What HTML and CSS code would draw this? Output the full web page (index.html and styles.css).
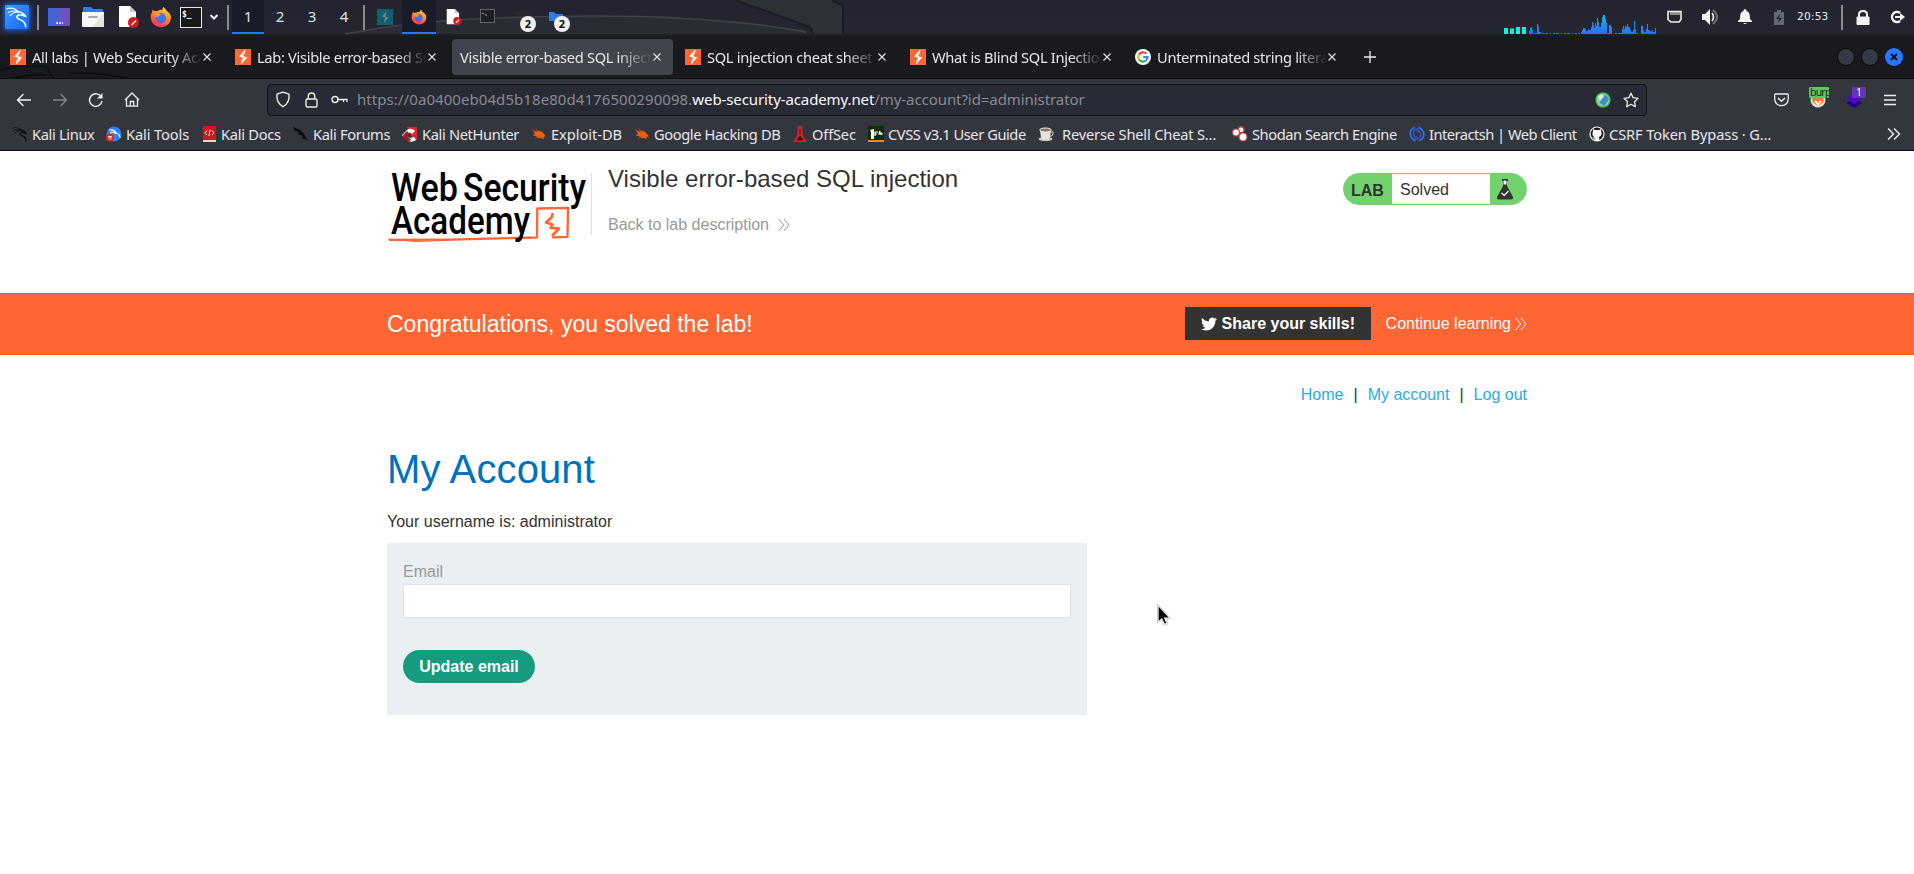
FILE: index.html
```html
<!DOCTYPE html>
<html lang="en">
<head>
<meta charset="utf-8">
<title>Visible error-based SQL injection</title>
<link rel="stylesheet" href="styles.css">
</head>
<body>
<svg class="defs" width="0" height="0" aria-hidden="true">
  <defs>
    <linearGradient id="gdesk" x1="0" x2="1"><stop offset="0" stop-color="#3568e0"/><stop offset="1" stop-color="#7a4cb0"/></linearGradient>
    <linearGradient id="gfox" x1="0.8" y1="0" x2="0.3" y2="1"><stop offset="0" stop-color="#ffdf45"/><stop offset="0.45" stop-color="#ff8a22"/><stop offset="1" stop-color="#f5305c"/></linearGradient>
    <linearGradient id="gcpu" x1="0" y1="0" x2="0" y2="1"><stop offset="0" stop-color="#12b5f5"/><stop offset="1" stop-color="#2470ff"/></linearGradient>
    <symbol id="dragon" viewBox="0 0 24 24"><g fill="none" stroke="currentColor" stroke-linecap="round" stroke-linejoin="round"><path d="M1 3C6 1.500 10 2.500 13.500 6.500M2.500 7C7 4.500 10 5 13.500 6.500M4.500 10.500C7 7.500 10 6.500 13 6.500" stroke-width="1.200"/><path d="M12 6C15 6.500 17.500 6.500 19.500 9L21.500 11.500 18 10C12.500 8.500 10 12 13.500 14 18 16 21 17 21.500 22.500" stroke-width="1.700"/></g></symbol>
    <symbol id="bolt" viewBox="0 0 16 16"><rect width="16" height="16" fill="#ff6633"/><path d="M9.500 1.500 4 7.500 8 8.700 6.800 14.500 12.200 8.400 8.300 7.200Z" fill="#fff"/><path d="M10 1 8.800 5.200M7.500 10.500 6.500 15" stroke="#fff" stroke-width="1.200"/></symbol>
    <symbol id="fox" viewBox="0 0 22 22"><path d="M13 1C15 1.500 15.500 4 18 6 21 8 22 12 20 16 17 21.500 9 23 4 18.500 .500 15.500-.300 10 2.200 6L2.500 3.500 4.200 5 7.500 5C9 3.500 11.500 4 12.500 3.700Z" fill="url(#gfox)"/><circle cx="10.800" cy="12.200" r="5" fill="#7a3fe0"/><circle cx="10.800" cy="11.800" r="4.400" fill="#337af5"/><path d="M4 6C7 7 8 6.500 11 8.500 10 10 8 9.500 8 11.500 6 11.500 5 9 4 6Z" fill="#ff9a28"/></symbol>
    <symbol id="doc" viewBox="0 0 22 22"><path d="M1 0H12L18 6V21H1Z" fill="#fff"/><path d="M12 0V6H18Z" fill="#c9c9c9"/><circle cx="15.500" cy="16.500" r="5.500" fill="#d3181e"/><path d="M13 18.500 17.500 14 18.500 15 14 19.500Z" fill="#fff"/></symbol>
    <symbol id="bug" viewBox="0 0 16 16"><path d="M2 4.500 5 5.500C8 3.500 11.500 5.500 13 8L14.500 10 12.500 11 13 13 10 12 7 12 5 10 1.500 9.500 4 8Z" fill="#e8600f"/><path d="M1 3.500 5 6M5 2.500 7 6M4 12.500 7 10M13 10 15 12" stroke="#b5521a" stroke-width=".8"/></symbol>
    <symbol id="close" viewBox="0 0 10 10"><path d="M1.500 1.500 8.500 8.500M8.500 1.500 1.500 8.500" stroke="#e6e6ea" stroke-width="1.100"/></symbol>
    <symbol id="dbl" viewBox="0 0 12 14"><path d="M.700 1 5.700 7 .700 13M6 1 11 7 6 13" fill="none" stroke="currentColor"/></symbol>
  </defs>
</svg>

<header class="panel">
  <svg class="wall" width="1914" height="36" viewBox="0 0 1914 36"><path d="M737 0 812 27 814 34H842V6L834 0Z" fill="#2e3038"/><path d="M735 0 810 27 813 34M832 0 843 6V34" fill="none" stroke="#1b1c27" stroke-width="2"/><path d="M345 34C470 14 690 8 806 32L806 34H345Z" fill="#292b35"/><path d="M345 34C400 24 440 20 500 18 640 12 740 20 806 32" fill="none" stroke="#40434a" stroke-width="1.500"/></svg>
  <div class="launch">
    <span class="kali"><svg width="22" height="22"><use href="#dragon"/></svg></span>
    <i class="sep s1"></i>
    <svg class="g9" width="22" height="18"><rect width="22" height="18" fill="url(#gdesk)"/><path d="M8 15H10M11 15H13M14 15H15" stroke="#fff" stroke-width="1.500"/></svg>
    <svg class="g12" width="22" height="20"><path d="M1 8V1Q1 0 2 0H9L11 2H20Q21 2 21 3V8Z" fill="#2f7bf2"/><path d="M0 5H22V19Q22 20 21 20H1Q0 20 0 19Z" fill="#f6f6f6"/><path d="M22 6V20H10Z" fill="#e3e3e3"/><path d="M7 10H15" stroke="#aaa" stroke-width="2" stroke-linecap="round"/></svg>
    <svg class="g14" width="22" height="22"><use href="#doc"/></svg>
    <svg class="g11" width="22" height="22"><use href="#fox"/></svg>
    <span class="term">$_</span>
    <svg class="g7" width="10" height="8"><path d="M1.500 2 5 5.500 8.500 2" fill="none" stroke="#eee" stroke-width="2"/></svg>
    <i class="sep s2"></i>
  </div>
  <div class="spaces"><b class="on">1</b><b>2</b><b>3</b><b>4</b></div>
  <i class="sep s3"></i>
  <div class="tasks">
    <span><svg width="16" height="16" viewBox="0 0 16 16"><rect width="16" height="16" fill="#125f70"/><path d="M9.500 2 5 7.500 8 8.500 7 14 11.500 8.500 8.500 7.500Z" fill="#73868c"/></svg></span>
    <span class="on"><svg width="16" height="16"><use href="#fox"/></svg></span>
    <span><svg width="16" height="16"><use href="#doc"/></svg></span>
    <span><svg width="16" height="14"><rect x=".5" y=".5" width="14" height="13" fill="#1d1e24" stroke="#63656d"/><path d="M2 4 4 5M5 6H7" stroke="#aaa"/></svg></span>
    <span><svg width="16" height="14"><path d="M0 2H16V6H0Z" fill="#292a31"/></svg><em>2</em></span>
    <span><svg width="16" height="14"><path d="M1 3H6L8 5H15V12H1Z" fill="#2f7bf2"/></svg><em>2</em></span>
  </div>
  <div class="status">
    <svg class="graph" width="152" height="20" viewBox="0 0 152 20"><path d="M0 14H4V20H0ZM6 14.500H10V20H6ZM12 13H16V20H12ZM18 13H22V20H18Z" fill="#08f5dc"/><path d="M25 20V17H26V14H27V13H28V16H29V19H33V10H34V12H35V18H37V20ZM77 20V18H78V16H79V14H81V15H82V17H84V15H85V16H87V13H88V8H89V11H90V14H91V9H92V12H93V4H94V8H95V13H97V9H98V3H99V1H101V5H102V9H103V19H105V11H107V13H108V20ZM117 20V19H118V15H119V12H120V15H121V12H122V13H123V10H124V13H126V16H127V18H129V16H130V7H131V15H132V19H134V20ZM137 20V12H139V16H140V18H142V15H143V10H144V16H146V17H147V18H148V16H149V18H151V14H152V20Z" fill="url(#gcpu)"/><path d="M38 19.500H76M111 19.500H117" stroke="#2676f2" stroke-dasharray="2 1 3 2 1 2"/></svg>
    <svg class="net" width="16" height="14"><path d="M1 1.500H14V9.500L12 12H4L1 9.500Z" fill="none" stroke="#eee" stroke-width="1.600"/><path d="M4 2V5M6 2V5M8 2V5M10 2V5M12 2V5" stroke="#eee"/></svg>
    <svg class="vol" width="18" height="16"><path d="M0 5H3L8 0V16L3 11H0Z" fill="#f3f3f3"/><path d="M10 4Q13 8 10 12" fill="none" stroke="#f3f3f3" stroke-width="1.700"/><path d="M11 1Q19 8 11 15" fill="none" stroke="#6d6e77" stroke-width="2"/></svg>
    <svg class="bell" width="14" height="16"><path d="M7 0Q8.500 0 8.500 2C12 3 12 7 12 10L14 12V13H0V12L2 10C2 7 2 3 5.500 2Q5.500 0 7 0ZM5 14H9Q7 16 5 14Z" fill="#f3f3f3"/></svg>
    <svg class="bat" width="10" height="15"><path d="M0 2H3V0H7V2H10V15H0Z" fill="#656772"/><path d="M6 4 2 9H5L4 13 8 8H5Z" fill="#20212c"/></svg>
    <time>20:53</time>
    <i class="sep s4"></i>
    <svg class="lock" width="14" height="15"><path d="M3 7V4.500Q3 1 7 1T11 4.500V7" fill="none" stroke="#f3f3f3" stroke-width="2"/><rect x=".5" y="6.500" width="13" height="8.500" rx="1" fill="#f3f3f3"/></svg>
    <svg class="out" width="15" height="14"><path d="M10 3A5 5 0 1 0 10 11" fill="none" stroke="#f3f3f3" stroke-width="2.400"/><path d="M5 6H10V3L15 7 10 11V8H5Z" fill="#f3f3f3"/></svg>
  </div>
</header>

<nav class="tabs">
  <svg class="wall" width="1914" height="42" viewBox="0 0 1914 42"><path d="M0 34Q22 28 47 31L54 43M10 43Q30 38 45 39M70 37Q100 36 130 43" fill="none" stroke="#0e0f12" stroke-width="2"/></svg>
  <div class="tab"><svg width="16" height="16"><use href="#bolt"/></svg><span>All labs | Web Security Academy</span><svg class="x" width="10" height="10"><use href="#close"/></svg></div>
  <div class="tab"><svg width="16" height="16"><use href="#bolt"/></svg><span>Lab: Visible error-based SQL injection</span><svg class="x" width="10" height="10"><use href="#close"/></svg></div>
  <div class="tab active"><span>Visible error-based SQL injection</span><svg class="x" width="10" height="10"><use href="#close"/></svg></div>
  <div class="tab"><svg width="16" height="16"><use href="#bolt"/></svg><span>SQL injection cheat sheet | Web</span><svg class="x" width="10" height="10"><use href="#close"/></svg></div>
  <div class="tab"><svg width="16" height="16"><use href="#bolt"/></svg><span>What is Blind SQL Injection? Tutorial</span><svg class="x" width="10" height="10"><use href="#close"/></svg></div>
  <div class="tab"><svg width="16" height="16" viewBox="0 0 16 16"><circle cx="8" cy="8" r="8" fill="#fff"/><g fill="none" stroke-width="2.200"><path d="M4 5.500A4.700 4.700 0 0 1 11.300 4.600" stroke="#ea4335"/><path d="M4 5.500A4.700 4.700 0 0 0 4 10.500" stroke="#fbbc05"/><path d="M4 10.500A4.700 4.700 0 0 0 11 11.500" stroke="#34a853"/><path d="M11 11.500Q12.700 10 12.600 8H8.200" stroke="#4285f4"/></g></svg><span>Unterminated string literal started</span><svg class="x" width="10" height="10"><use href="#close"/></svg></div>
  <svg class="plus" width="12" height="12"><path d="M6 0V12M0 6H12" stroke="#eee" stroke-width="1.300"/></svg>
  <div class="win"><i></i><i></i><i class="shut"><svg width="8" height="8"><path d="M1 1 7 7M7 1 1 7" stroke="#10131c" stroke-width="2"/></svg></i></div>
</nav>

<div class="toolbar">
  <svg class="back" width="16" height="14"><path d="M15 7H2M7.500 1 1.500 7 7.500 13" fill="none" stroke="#f2f2f4" stroke-width="1.300"/></svg>
  <svg class="fwd" width="16" height="14"><path d="M1 7H14M8.500 1 14.500 7 8.500 13" fill="none" stroke="#85868b" stroke-width="1.300"/></svg>
  <svg class="rel" width="16" height="16"><path d="M13.500 5.500A6.300 6.300 0 1 0 14 9" fill="none" stroke="#f2f2f4" stroke-width="1.400"/><path d="M14.500 1V6.500H9Z" fill="#f2f2f4"/></svg>
  <svg class="home" width="16" height="16"><path d="M1 8 8 1 15 8M2.500 7V14.200H13.500V7M6.300 14V9.500H9.700V14" fill="none" stroke="#f2f2f4" stroke-width="1.300" stroke-linejoin="round"/></svg>
  <div class="url">
    <svg class="shield" width="16" height="17"><path d="M8 1.200 14 3.200Q15 12 8 15.700 1 12 2 3.200Z" fill="none" stroke="#eee" stroke-width="1.400" stroke-linejoin="round"/></svg>
    <svg class="padl" width="13" height="16"><rect x="1" y="7" width="11" height="8" rx="1.500" fill="none" stroke="#eee" stroke-width="1.400"/><path d="M3.300 7V4Q3.300 1 6.500 1T9.700 4V7" fill="none" stroke="#eee" stroke-width="1.400"/></svg>
    <svg class="key" width="17" height="9"><circle cx="4" cy="4.500" r="3" fill="none" stroke="#eee" stroke-width="1.400"/><path d="M7 4.500H16V7M12.500 4.500V7" fill="none" stroke="#eee" stroke-width="1.300"/></svg>
    <span class="addr"><u>https://0a0400eb04d5b18e80d4176500290098.</u><b>web-security-academy.net</b>/my-account?id=administrator</span>
    <svg class="globe" width="16" height="16"><circle cx="8" cy="8" r="7.700" fill="#4cb44e"/><circle cx="8" cy="8" r="6.200" fill="#8fdca0"/><path d="M7 4 11 3 14 7 11 12 9 14 6 12 4 10 7 8Z" fill="#3f8fd0"/><path d="M3 4 7 2 9 5 5 8Z" fill="#d8f5c8"/></svg>
    <svg class="star" width="16" height="16"><path d="M8 1.200 10.100 5.600 15 6.300 11.500 9.700 12.300 14.700 8 12.300 3.700 14.700 4.500 9.700 1 6.300 5.900 5.600Z" fill="none" stroke="#eee" stroke-width="1.300" stroke-linejoin="round"/></svg>
  </div>
  <svg class="pocket" width="15" height="14"><path d="M1.500 1H13.500Q14.300 1 14.300 2V5.500Q14 12.500 7.500 12.700 1 12.500 .700 5.500V2Q.700 1 1.500 1Z" fill="none" stroke="#eee" stroke-width="1.300"/><path d="M4 5 7.500 8.300 11 5" fill="none" stroke="#eee" stroke-width="1.500"/></svg>
  <span class="ext e1"><svg width="16" height="16"><circle cx="8" cy="8" r="7.500" fill="#ece0d2"/><path d="M2 3 6 5H10L14 3 13.500 10 8 14 2.500 10Z" fill="#ec7e28"/><path d="M4 9H7L8 12 9 9H12L8 14Z" fill="#fff"/></svg><em>burp</em></span>
  <span class="ext e2"><svg width="16" height="16"><path d="M0 11 8 6 16 11 8 16Z" fill="#23008a"/><path d="M0 6 8 1 16 6 8 12Z" fill="#5009bd"/></svg><em>1</em></span>
  <svg class="menu" width="12" height="12"><path d="M0 1.500H12M0 6H12M0 10.500H12" stroke="#eee" stroke-width="1.300"/></svg>
</div>

<div class="marks">
  <a><svg class="dk" width="16" height="16"><use href="#dragon"/></svg><span>Kali Linux</span></a>
  <a><svg width="16" height="16" viewBox="0 0 16 16"><circle cx="8" cy="8" r="7.500" fill="#2d7df6"/><path d="M3 4Q9 3 10 7 14 8 14 12M4 7Q8 5 10 8" fill="none" stroke="#fff" stroke-width="1.200"/><circle cx="4" cy="11.500" r="4" fill="#dd2828"/><path d="M2 10.500H6M3.200 10V13.500M5 10V13.500" stroke="#fff" stroke-width=".8"/></svg><span>Kali Tools</span></a>
  <a><svg class="book" width="13" height="16"><rect width="13" height="15" fill="#d2161c"/><path d="M0 15H13" stroke="#e6d3d3" stroke-width="2"/><path d="M4 4.500 2 7 4 9M9 4.500 11 7 9 9M7 3.500 6 10" stroke="#fff" fill="none"/></svg><span>Kali Docs</span></a>
  <a><svg width="16" height="16"><path d="M0 1 5 3 8 5 12 9 13 12 16 15 12 13 9 12 10 10 5 8 6 6 2 5Z" fill="#08090b"/></svg><span>Kali Forums</span></a>
  <a><svg width="16" height="16"><path d="M5 1H15V14L12 15Z" fill="#dc2830"/><path d="M0 9 5 4Q9 1 13 5L10 8Q8 5 6 8T8 12L12 11 14 14Q8 18 4 13Z" fill="#fff"/><path d="M1 9 5 5 7 7Q4 11 9 13L8 15Q2 15 1 9Z" fill="#a91722"/></svg><span>Kali NetHunter</span></a>
  <a><svg width="16" height="16"><use href="#bug"/></svg><span>Exploit-DB</span></a>
  <a><svg width="16" height="16"><use href="#bug"/></svg><span>Google Hacking DB</span></a>
  <a><svg class="off" width="14" height="16"><path d="M5 0H9L10 10 14 16H0L4 10Z" fill="#d3202a"/><path d="M7 3V8M4 14 7 10 10 14Z" stroke="#451217" fill="#451217"/></svg><span>OffSec</span></a>
  <a><svg width="16" height="16"><rect width="16" height="14" fill="#132b0b"/><path d="M0 15H16" stroke="#f58a18" stroke-width="2"/><path d="M2 4 6 3V13H3V6Z" fill="#fff"/><path d="M7 10V6H10M7 8H9M12 5 11 8H15M13 6V9" stroke="#fff" stroke-width="1.200" fill="none"/></svg><span>CVSS v3.1 User Guide</span></a>
  <a><svg class="cup" width="16" height="16"><ellipse cx="7.500" cy="13" rx="7" ry="2" fill="#c9c9c6"/><path d="M2 4H13L12 12Q7.500 15 3 12Z" fill="#e5e2dc"/><ellipse cx="7.500" cy="4" rx="5.800" ry="2" fill="#8d7358" stroke="#eee"/><path d="M13 6Q16 5 15 8T12 10" fill="none" stroke="#ddd"/></svg><span>Reverse Shell Cheat S…</span></a>
  <a><svg width="16" height="16"><g fill="#fff" stroke="#d23b42" stroke-width="1.200"><circle cx="9" cy="3.800" r="3"/><circle cx="4" cy="6.500" r="3.500"/><circle cx="11" cy="11" r="4"/></g></svg><span>Shodan Search Engine</span></a>
  <a><svg width="16" height="16"><g fill="none" stroke="#2f6fee" stroke-width="1.700" stroke-linecap="round"><path d="M5 1.500Q1 4 1.200 8T6 14.500M11 14.500Q15 12 14.800 8T10 1.500"/><path d="M10.500 3Q5 2 4.500 6.500T8 11M5.500 13Q11 14 11.500 9.500T8 5" stroke="#3c55d8" stroke-width="1.300"/></g></svg><span>Interactsh | Web Client</span></a>
  <a><svg width="16" height="16" viewBox="0 0 16 16"><circle cx="8" cy="8" r="7.600" fill="#f5f5f5"/><circle cx="8" cy="8" r="6.400" fill="#17191d"/><path d="M5.500 15V12.500Q3.500 12.500 3 11 5 12 5.500 11 3 10 3.500 7L4 5V3L6 4H10L12 3V5Q14 9 10 11 10.500 13 10.500 15Z" fill="#f5f5f5"/></svg><span>CSRF Token Bypass · G…</span></a>
  <svg class="more" width="14" height="12"><path d="M1 .5 6.500 6 1 11.500M7 .5 12.500 6 7 11.500" fill="none" stroke="#eee" stroke-width="1.400"/></svg>
</div>

<main class="page">
  <section class="lab wrap">
    <svg class="logo" width="200" height="72" viewBox="387 172 200 72">
      <path d="M389 239.800 450 239.600 537 237.500 537.300 208.500 568 207.800 567.500 236.800 552 237.300" fill="none" stroke="#ff6633" stroke-width="2.300" stroke-linejoin="round"/>
      <path d="M388 239 415 241.500 450 240.300" fill="none" stroke="#ff6633" stroke-width="1"/>
      <path d="M552.700 213 551.500 217.500 546 222.500 552.300 224.500 550.500 227.800 559 228.500 552 236" fill="none" stroke="#ff6633" stroke-width="2.700" stroke-linejoin="round"/>
      <g class="mark"><text x="391" y="201" textLength="67" lengthAdjust="spacingAndGlyphs">Web</text><text x="463" y="201" textLength="123" lengthAdjust="spacingAndGlyphs">Security</text><text x="391" y="234" textLength="139" lengthAdjust="spacingAndGlyphs">Academy</text></g>
    </svg>
    <div class="title"><h2>Visible error-based SQL injection</h2><a>Back to lab description<svg width="12" height="14"><use href="#dbl"/></svg></a></div>
    <div class="pill"><b>LAB</b><span>Solved</span><svg width="16" height="21" viewBox="0 0 16 21"><path d="M5 0H11V2H10V7L16 18Q16.500 20.500 14 20.500H2Q-.500 20.500 0 18L6 7V2H5Z" fill="#333332"/><path d="M6.500 1.500H9.500V5.500H6.500Z" fill="#f4f4f4"/><path d="M4.500 14 7.200 16.500 11.500 12" fill="none" stroke="#fff" stroke-width="1.200"/></svg></div>
  </section>
  <section class="banner"><div class="wrap">
    <h4>Congratulations, you solved the lab!</h4>
    <button class="share"><svg width="16" height="16" viewBox="0 0 24 24"><path fill="#fff" d="M23.950 4.570a10 10 0 0 1-2.820.770 4.960 4.960 0 0 0 2.160-2.720c-.950.550-2 .950-3.130 1.180a4.920 4.920 0 0 0-8.380 4.480C7.690 8.090 4.070 6.130 1.640 3.160a4.820 4.820 0 0 0-.670 2.480c0 1.710.870 3.210 2.190 4.100a4.900 4.900 0 0 1-2.230-.620v.060a4.920 4.920 0 0 0 3.950 4.830 5 5 0 0 1-2.210.080 4.940 4.940 0 0 0 4.600 3.420A9.870 9.870 0 0 1 0 19.540a14 14 0 0 0 7.550 2.210c9.050 0 14-7.500 14-13.990 0-.210 0-.420-.020-.630a9.940 9.940 0 0 0 2.460-2.550z"/></svg>Share your skills!</button>
    <a>Continue learning<svg width="12" height="14"><use href="#dbl"/></svg></a>
  </div></section>
  <section class="wrap body">
    <nav class="links"><a>Home</a><p>|</p><a>My account</a><p>|</p><a>Log out</a></nav>
    <h1>My Account</h1>
    <p class="user">Your username is: administrator</p>
    <form class="form"><label>Email</label><input type="email"><button type="button">Update email</button></form>
  </section>
</main>
<svg class="cursor" width="14" height="22" viewBox="0 0 14 22"><path d="M1 1V18.500L4.700 15 7.500 20.500 10 19.300 7.700 14H13Z" fill="#0b0b0b" stroke="#fff" stroke-width="1.200"/><path d="M.5 0V19L4.500 16 7 21.500 11 19.800 9 14.500H13.500L.5 0" fill="none" stroke="#999" stroke-width=".5"/></svg>
</body>
</html>
```
FILE: styles.css
```css
* { box-sizing: border-box; }
body { margin: 0; width: 1914px; height: 874px; overflow: hidden; background: #fff; font-family: "Liberation Sans", Arial, sans-serif; font-size: 16px; color: #333332; }
svg { display: block; flex: none; }
h1, h2, h4, p { margin: 0; font-weight: 400; }
.defs { position: absolute; }
.wall { position: absolute; left: 0; top: 0; }

/* desktop panel */
.panel { position: relative; height: 36px; display: flex; background: linear-gradient(#22232f, #252632 94%, #1f2023 95%); font-family: "Noto Sans", sans-serif; }
.panel > div, .panel > i { position: relative; }
.sep { display: block; flex: none; width: 2px; height: 25px; margin-top: 5px; background: #8b8c92; }
.launch { display: flex; width: 232px; height: 34px; align-items: center; padding-left: 5px; }
.launch .sep { margin-top: 0; }
.kali { width: 24px; height: 24px; background: linear-gradient(135deg, #39a0f5, #1766ff); box-shadow: 0 0 5px 1px #1565ee; color: #fff; padding: 1px; border-radius: 1px; }
.launch .s1 { margin-left: 8px; }
.g9 { margin-left: 9px; }
.g12 { margin-left: 12px; }
.g14 { margin-left: 14px; }
.g11 { margin-left: 10px; }
.g7 { margin-left: 7px; }
.term { margin-left: 8px; width: 22px; height: 21px; border: 1px solid #e8e8e8; background: #17181b; color: #fff; font: bold 8px/13px "DejaVu Sans Mono", monospace; padding-left: 1px; }
.launch .s2 { margin-left: 8px; }
.spaces { display: flex; }
.spaces b { width: 32px; height: 34px; font: 400 15px/33px "Noto Sans", sans-serif; text-align: center; color: #dce3ea; }
.spaces .on, .tasks .on { background: #191b28; border-bottom: 2px solid #2777ff; }
.s3 { margin-left: 3px; }
.tasks { display: flex; margin-left: 3px; }
.tasks span { position: relative; width: 34px; height: 34px; padding: 9px 0 0 9px; }
.tasks span:nth-child(n+3) { padding-left: 10px; }
.tasks em { position: absolute; left: 16px; top: 16px; width: 16px; height: 16px; border-radius: 50%; background: #f0f0f0; color: #111; font: bold 11px/16px "Noto Sans", sans-serif; text-align: center; }
.status { display: flex; align-items: center; height: 34px; margin-left: auto; padding-right: 9px; }
.graph { align-self: flex-end; }
.net { margin-left: 11px; }
.vol { margin-left: 19px; }
.bell { margin-left: 18px; }
.bat { margin-left: 22px; }
.status time { width: 33px; margin-left: 13px; font: 10.600px/32px "DejaVu Sans", sans-serif; letter-spacing: .2px; color: #e8e8ea; white-space: nowrap; margin-top: -2px; }
.status .s4 { margin: 0 0 0 11px; }
.lock { margin-left: 13px; }
.out { margin-left: 20px; }

/* browser tabs */
.tabs { position: relative; display: flex; height: 43px; background: #191a1e; border-bottom: 1px solid #0e0f11; padding-left: 2px; font: 14.670px/20px "Noto Sans", sans-serif; letter-spacing: -.32px; color: #e7e7e9; }
.tab { position: relative; display: flex; align-items: center; width: 221px; height: 36px; margin: 3px 4px 0 0; padding: 0 11px 0 8px; border-radius: 4px; }
.tab span { flex: 1; min-width: 0; overflow: hidden; white-space: nowrap; margin-left: 6px; -webkit-mask-image: linear-gradient(to right, #000 82%, transparent 100%); mask-image: linear-gradient(to right, #000 82%, transparent 100%); }
.tab.active { background: #42444b; }
.tab.active span { margin-left: 0; }
.plus { margin: 15px 0 0 12px; }
.win { display: flex; gap: 6px; margin: 12px 11px 0 auto; }
.win i { width: 18px; height: 18px; border-radius: 50%; background: #353944; border: 1px solid #090a0c; }
.win .shut { background: #2777ff; border: 0; padding: 5px; }

/* address row */
.toolbar { display: flex; align-items: center; height: 39px; background: #34363e; padding: 2px 18px 0 16px; }
.fwd { margin-left: 20px; }
.rel { margin-left: 20px; }
.home { margin-left: 20px; }
.url { display: flex; align-items: center; width: 1380px; height: 32px; margin-left: 127px; padding: 0 7px; border: 1px solid #101216; border-radius: 4px; background: #282a35; }
.padl { margin-left: 14px; }
.key { margin-left: 13px; }
.addr { flex: 1; margin: -2px 0 0 9px; font: 15px/22px "Noto Sans", sans-serif; letter-spacing: -.07px; color: #898a91; white-space: nowrap; }
.addr u { text-decoration: none; letter-spacing: .07px; }
.addr b { font-weight: 400; letter-spacing: -.1px; color: #fbfbfe; }
.star { margin-left: 12px; }
.pocket { margin-left: 127px; }
.ext { position: relative; width: 16px; height: 16px; }
.ext em { position: absolute; top: -5px; overflow: hidden; height: 11px; font: 10.500px/10px "Noto Sans", sans-serif; text-align: center; }
.e1 { margin-left: 21px; }
.e1 em { left: -1px; width: 20px; background: #5fc466; color: #14311a; border-radius: 1px; text-align: left; padding-left: 1px; letter-spacing: -.8px; }
.e2 { margin-left: 20px; }
.e2 em { left: 6px; width: 14px; background: #6236b8; color: #fff; border-radius: 1px; }
.menu { margin-left: auto; }

/* bookmarks */
.marks { display: grid; grid-template-columns: 94px 97px 90px 109px 129px 103px 159px 75px 170px 194px 177px 180px 298px 14px; align-items: center; height: 33px; padding-left: 12px; background: #34363e; border-bottom: 1px solid #08090d; font: 14.670px/20px "Noto Sans", sans-serif; letter-spacing: -.35px; color: #e7e7ea; }
.marks a { display: flex; align-items: center; white-space: nowrap; }
.marks a span { margin-left: 4px; }
.marks a:nth-child(2), .marks a:nth-child(13) { letter-spacing: -.12px; }
.marks a:nth-child(3) { letter-spacing: -.27px; }
.marks a:nth-child(6) { letter-spacing: -.05px; }
.marks a:nth-child(8), .marks a:nth-child(10) { letter-spacing: -.18px; }
.marks a:nth-child(7) { letter-spacing: -.4px; }
.marks a:nth-child(9), .marks a:nth-child(11) { letter-spacing: -.44px; }
.marks a:nth-child(12) { letter-spacing: -.52px; }
.dk { color: #08090b; }
.marks .book + span, .marks .off + span { margin-left: 5px; }
.marks .cup + span { margin-left: 8px; }

/* page */
.wrap { width: 1140px; margin: 0 auto; }
.lab { display: flex; height: 142px; padding-top: 21px; }
.mark { font: 500 38px Roboto, sans-serif; fill: #000; }
.title { width: 600px; height: 62px; margin: 1px 0 0 4px; padding-left: 16px; border-left: 1px solid #e0e0e0; }
.title h2 { font-size: 24px; line-height: 28px; margin-top: -8px; letter-spacing: .02px; }
.title a { display: flex; align-items: center; margin-top: 22px; line-height: 20px; color: #999; }
.title a svg { margin-left: 9px; }
.pill { display: flex; width: 184px; height: 32px; margin: 1px 0 0 auto; border: 1px solid #72d36e; border-radius: 16px; background: #72d36e; align-items: center; overflow: hidden; }
.pill b { width: 48px; padding: 3px 0 0 7px; line-height: 20px; }
.pill span { width: 98px; height: 30px; line-height: 31px; background: #fff; padding-left: 8px; }
.pill svg { margin-left: 7px; }
.banner { height: 62px; background: #ff6633; color: #fff; }
.banner .wrap { display: flex; align-items: center; height: 62px; }
.banner h4 { font-size: 23px; margin-right: auto; }
.banner a { display: flex; align-items: center; }
.banner a svg { margin-left: 4px; }
.share { display: flex; align-items: center; gap: 5px; width: 186px; height: 33px; margin: -1px 15px 0 0; padding: 0 16px; border: 0; background: #333332; color: #fff; font: bold 16px "Liberation Sans", Arial, sans-serif; white-space: nowrap; }
.links { display: flex; justify-content: flex-end; gap: 10px; padding-top: 30px; line-height: 20px; }
.links a { color: #29ace3; }
.body h1 { margin-top: 41px; font-size: 40px; line-height: 46px; letter-spacing: .12px; color: #0071bd; }
.user { margin-top: 20px; line-height: 20px; }
.form { display: flex; flex-direction: column; align-items: flex-start; width: 700px; height: 172px; margin-top: 11px; padding: 19px 16px; background: #eaeff2; }
.form label { color: #999; line-height: 20px; }
.form input { width: 668px; height: 34px; margin-top: 2px; border: 1px solid #e0e3e4; background: #fff; }
.form button { width: 132px; height: 33px; margin-top: 32px; border: 0; border-radius: 17px; background: #169b80; color: #fff; font: bold 16px "Liberation Sans", Arial, sans-serif; padding: 0; }
.cursor { position: absolute; left: 1157px; top: 604px; }
```
